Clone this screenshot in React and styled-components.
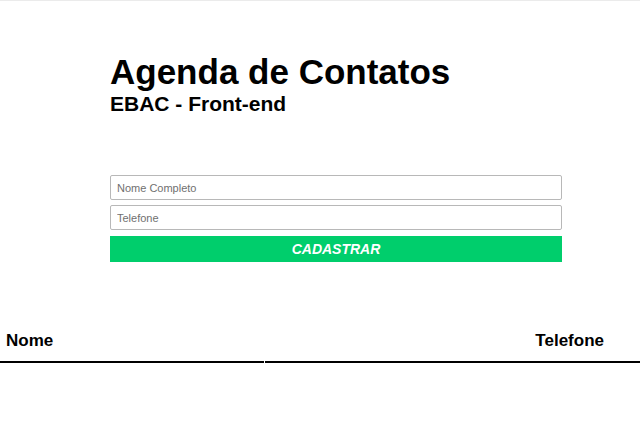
import React from 'react';
import styled, { createGlobalStyle } from 'styled-components';

const GlobalStyle = createGlobalStyle`
  body {
    margin: 0;
    font-family: "Liberation Sans", Arial, sans-serif;
    background: #fff;
    border-top: 1px solid #ebebeb;
  }
`;

const Header = styled.header`
  padding: 50px 0 0 110px;
`;

const Title = styled.h1`
  margin: 0;
  font-size: 35px;
  line-height: 42px;
  font-weight: 700;
  color: #000;
`;

const Subtitle = styled.h2`
  margin: 0;
  font-size: 21px;
  line-height: 22px;
  font-weight: 700;
  color: #000;
`;

const Form = styled.form`
  display: flex;
  flex-direction: column;
  gap: 5px;
  width: 452px;
  margin: 60px 0 0 110px;
`;

const Input = styled.input`
  box-sizing: border-box;
  height: 25px;
  padding: 0 6px;
  border: 1px solid #b8b8b8;
  border-radius: 2px;
  font-family: "Liberation Sans", Arial, sans-serif;
  font-size: 11px;
  &::placeholder {
    color: #707070;
  }
`;

const Button = styled.button`
  height: 26px;
  margin-top: 1px;
  border: none;
  background: #00ce6c;
  color: #fff;
  font-family: "Liberation Sans", Arial, sans-serif;
  font-size: 14px;
  font-weight: 700;
  font-style: italic;
  cursor: pointer;
`;

const Table = styled.table`
  width: calc(100% + 2px);
  margin: 61px 0 0 -1px;
  border-spacing: 1px 0;
  border-collapse: separate;
`;

const Th = styled.th`
  box-sizing: border-box;
  padding: 8px 5px 10px 6px;
  font-size: 17px;
  font-weight: 700;
  text-align: ${({ $align }) => $align || 'left'};
  padding-right: ${({ $align }) => ($align === 'right' ? '36px' : '5px')};
  border-bottom: 2px solid #000;
  width: ${({ $w }) => $w || 'auto'};
`;

const App = () => (
  <>
    <GlobalStyle />
    <Header>
      <Title>Agenda de Contatos</Title>
      <Subtitle>EBAC - Front-end</Subtitle>
    </Header>
    <Form onSubmit={(e) => e.preventDefault()}>
      <Input type="text" placeholder="Nome Completo" />
      <Input type="tel" placeholder="Telefone" />
      <Button type="submit">CADASTRAR</Button>
    </Form>
    <Table>
      <thead>
        <tr>
          <Th $w="264px">Nome</Th>
          <Th $align="right">Telefone</Th>
        </tr>
      </thead>
    </Table>
  </>
);

export default App;
